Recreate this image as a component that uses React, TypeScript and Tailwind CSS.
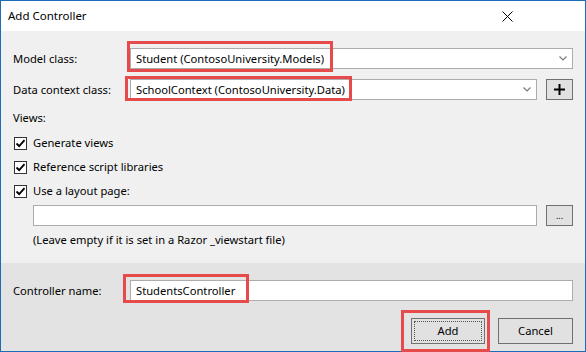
// Add Controller dialog (Windows-style)

function Combo({ value, className }: { value: string; className?: string }) {
  return (
    <div
      className={`relative flex h-[21px] items-center border border-[#acacac] bg-white pl-[5px] ${className ?? ''}`}
    >
      <span className="truncate">{value}</span>
      <svg
        className="absolute right-[5px] top-[7px]"
        width="8"
        height="5"
        viewBox="0 0 8 5"
      >
        <path d="M0.5 0.5 L4 4 L7.5 0.5" fill="none" stroke="#7a7a7a" strokeWidth="1.2" />
      </svg>
    </div>
  );
}

function Check({ label }: { label: string }) {
  return (
    <div className="flex h-[24px] items-center">
      <span className="flex h-[13px] w-[13px] items-center justify-center border border-[#333] bg-white">
        <svg width="11" height="11" viewBox="0 0 11 11">
          <path d="M1.5 5.5 L4.2 8.2 L9.5 2.2" fill="none" stroke="#000" strokeWidth="1.8" />
        </svg>
      </span>
      <span className="ml-[6px]">{label}</span>
    </div>
  );
}

function RedBox({ className }: { className: string }) {
  return <div className={`pointer-events-none absolute border-[3px] border-[#e74a4a] ${className}`} />;
}

export default function App() {
  return (
    <div
      className="flex h-[352px] w-[586px] flex-col border border-[#1c6cb8] text-[11.2px] leading-[16px] text-black"
      style={{ fontFamily: '"Segoe UI", "Noto Sans", Arial, sans-serif' }}
    >
      {/* title bar */}
      <div className="flex h-[30px] items-center justify-between bg-white pl-[7px] pr-[72px]">
        <span className="text-[11.5px]">Add Controller</span>
        <svg width="11" height="11" viewBox="0 0 11 11">
          <path d="M0.5 0.5 L10.5 10.5 M10.5 0.5 L0.5 10.5" stroke="#000" strokeWidth="1" />
        </svg>
      </div>

      {/* main */}
      <div className="flex h-[232px] flex-col bg-[#f0f0f0] px-[12px] pt-[17px]">
        <div className="flex items-center">
          <span className="w-[117px]">Model class:</span>
          <div className="relative flex-1">
            <Combo value="Student (ContosoUniversity.Models)" />
            <RedBox className="left-[-3px] top-[-7px] h-[31px] w-[206px]" />
          </div>
        </div>

        <div className="mt-[10px] flex items-center">
          <span className="w-[117px]">Data context class:</span>
          <div className="relative flex-1">
            <Combo value="SchoolContext (ContosoUniversity.Data)" />
            <RedBox className="left-[-5px] top-[-3px] h-[25px] w-[227px]" />
          </div>
          <button className="ml-[9px] flex h-[21px] w-[27px] items-center justify-center border border-[#707070] bg-[#e1e1e1]">
            <svg width="11" height="11" viewBox="0 0 11 11">
              <path d="M5.5 0 V11 M0 5.5 H11" stroke="#000" strokeWidth="2" />
            </svg>
          </button>
        </div>

        <div className="mt-[10px]">Views:</div>
        <div className="mt-[5px] flex flex-col pl-[1px]">
          <Check label="Generate views" />
          <Check label="Reference script libraries" />
          <Check label="Use a layout page:" />
        </div>

        <div className="mt-[2px] flex items-center pl-[20px]">
          <div className="h-[21px] flex-1 border border-[#acacac] bg-white" />
          <button className="ml-[9px] flex h-[21px] w-[27px] items-end justify-center border border-[#707070] bg-[#e1e1e1] pb-[5px] text-[9px] leading-none">
            ...
          </button>
        </div>
        <div className="mt-[6px] pl-[20px]">(Leave empty if it is set in a Razor _viewstart file)</div>
      </div>

      {/* bottom panel */}
      <div className="flex flex-1 flex-col bg-[#e3e3e3] px-[12px] pt-[17px]">
        <div className="flex items-center">
          <span className="w-[117px]">Controller name:</span>
          <div className="relative flex h-[21px] flex-1 items-center border border-[#acacac] bg-white pl-[5px]">
            StudentsController
            <RedBox className="left-[-8px] top-[-7px] h-[29px] w-[126px]" />
          </div>
        </div>
        <div className="mt-[17px] flex justify-end">
          <div className="relative">
            <button className="flex h-[26px] w-[74px] items-center justify-center border border-[#707070] bg-[#e1e1e1]">
              <span className="flex h-[20px] w-[68px] items-center justify-center border border-dotted border-[#555]">
                Add
              </span>
            </button>
            <RedBox className="left-[-10px] top-[-8px] h-[42px] w-[89px]" />
          </div>
          <button className="ml-[13px] h-[26px] w-[75px] border border-[#707070] bg-[#e1e1e1]">Cancel</button>
        </div>
      </div>
    </div>
  );
}
